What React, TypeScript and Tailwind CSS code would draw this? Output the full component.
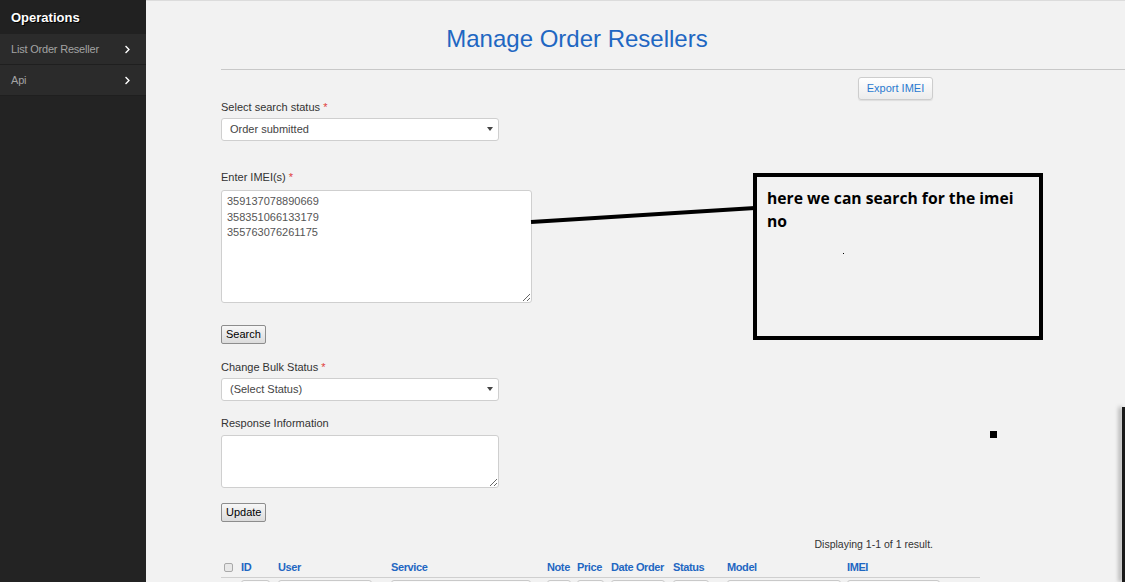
import React from 'react';
import { FaChevronRight } from 'react-icons/fa';

const font = { fontFamily: '"Liberation Sans", Arial, sans-serif' };

// Sidebar menu entry
const MenuItem = ({ label }: { label: string }) => (
  <div className="flex items-center justify-between h-[31px] pl-[11px] pr-[14px] bg-[#2b2b2b] border-b border-[#1f1f1f] text-[11px] text-[#a3a3a3] tracking-[-0.2px]">
    <span>{label}</span>
    <FaChevronRight className="text-white" size={9} />
  </div>
);

const Label = ({ text, required }: { text: string; required?: boolean }) => (
  <div className="text-[11px] leading-[14px] text-[#333]">
    {text} {required && <span className="text-[#e03c3c]">*</span>}
  </div>
);

const FakeSelect = ({ value }: { value: string }) => (
  <div className="relative flex items-center w-[278px] h-[23px] bg-white border border-[#cfcfcf] rounded-[3px] pl-[8px] text-[11px] text-[#444]">
    {value}
    <span className="absolute right-[5px] top-[8px] w-0 h-0 border-l-[3px] border-r-[3px] border-t-[4px] border-l-transparent border-r-transparent border-t-[#444]" />
  </div>
);

const GrayButton = ({ label }: { label: string }) => (
  <button className="block h-[19px] px-[4px] text-[11px] leading-none text-black bg-gradient-to-b from-[#f7f7f7] to-[#dcdcdc] border border-[#8d8d8d] rounded-[2px]">
    {label}
  </button>
);

const columns = [
  { label: 'ID', w: 37, input: 29 },
  { label: 'User', w: 113, input: 94 },
  { label: 'Service', w: 156, input: 140 },
  { label: 'Note', w: 30, input: 24 },
  { label: 'Price', w: 34, input: 27 },
  { label: 'Date Order', w: 62, input: 54 },
  { label: 'Status', w: 54, input: 36 },
  { label: 'Model', w: 120, input: 114 },
  { label: 'IMEI', w: 133, input: 93 },
];

const App: React.FC = () => {
  return (
    <div className="relative flex w-[1125px] h-[582px] overflow-hidden" style={font}>
      {/* Sidebar */}
      <aside className="w-[146px] shrink-0 bg-[#232323]">
        <div className="h-[34px] flex items-center pl-[11px] pt-[1px] bg-[#212121] text-[13px] font-bold text-white [text-shadow:1px_1px_0_#000]">
          Operations
        </div>
        <MenuItem label="List Order Reseller" />
        <MenuItem label="Api" />
      </aside>

      {/* Main */}
      <main className="flex-1 bg-[#f2f2f2] border-t border-[#dcdcdc] pt-[24px]">
        <div className="pl-[75px]">
          <h1 className="w-[712px] text-center text-[24px] leading-7 text-[#1f67c2]">Manage Order Resellers</h1>
        </div>
        <div className="ml-[75px] mt-[16px] border-t border-[#c8c8c8]" />

        <div className="pl-[75px]">
          <div className="w-[712px] flex justify-end mt-[7px]">
            <button className="block w-[75px] h-[23px] text-[11px] text-[#2a7ad0] bg-gradient-to-b from-white to-[#ececec] border border-[#cdcdcd] rounded-[3px] shadow-[0_1px_1px_rgba(0,0,0,0.08)]">
              Export IMEI
            </button>
          </div>

          <Label text="Select search status" required />
          <div className="mt-[4px]">
            <FakeSelect value="Order submitted" />
          </div>

          <div className="mt-[29px]">
            <Label text="Enter IMEI(s)" required />
          </div>
          <textarea
            readOnly
            className="block mt-[6px] w-[311px] h-[113px] bg-white border border-[#cfcfcf] rounded-[3px] px-[5px] py-[3px] text-[11px] leading-[15.5px] text-[#555] outline-none resize"
            value={'359137078890669\n358351066133179\n355763076261175'}
          />

          <div className="mt-[22px]">
            <GrayButton label="Search" />
          </div>

          <div className="mt-[16px]">
            <Label text="Change Bulk Status" required />
          </div>
          <div className="mt-[4px]">
            <FakeSelect value="(Select Status)" />
          </div>

          <div className="mt-[15px]">
            <Label text="Response Information" />
          </div>
          <textarea
            readOnly
            className="block mt-[5px] w-[278px] h-[53px] bg-white border border-[#cfcfcf] rounded-[3px] outline-none"
          />

          <div className="mt-[15px]">
            <GrayButton label="Update" />
          </div>

          <div className="w-[712px] mt-[15px] text-right text-[10.5px] leading-[14px] text-[#333]">Displaying 1-1 of 1 result.</div>

          {/* Table header */}
          <div className="w-[759px] mt-[6px]">
            <div className="flex items-center h-[21px] border-b border-[#cfcfcf] text-[11px] font-bold text-[#1f67c2] tracking-[-0.4px]">
              <div className="w-[20px] pl-[3px]">
                <div className="w-[9px] h-[9px] border border-[#a9a9a9] rounded-[2px] bg-[#e8e8e8]" />
              </div>
              {columns.map((c) => (
                <div key={c.label} style={{ width: c.w }}>{c.label}</div>
              ))}
            </div>
            <div className="flex pt-[2px]">
              <div className="w-[20px]" />
              {columns.map((c) => (
                <div key={c.label} style={{ width: c.w }}>
                  <div className="h-[18px] bg-[#fafafa] border border-[#c9c9c9] rounded-[3px]" style={{ width: c.input }} />
                </div>
              ))}
            </div>
          </div>
        </div>
      </main>

      {/* Annotation: connector line */}
      <svg className="absolute left-0 top-0 pointer-events-none" width="1125" height="582">
        <line x1="531" y1="222" x2="755" y2="208" stroke="#000" strokeWidth="4" />
      </svg>

      {/* Annotation: callout box */}
      <div className="absolute left-[753px] top-[173px] w-[290px] h-[167px] border-4 border-black pl-[10px] pt-[10px] text-[15.7px] leading-[23px] font-bold text-black" style={{ fontFamily: '"Open Sans", "Noto Sans", sans-serif' }}>
        here we can search for the imei
        <br />
        no
        <div className="absolute left-[86px] top-[76px] w-[1px] h-[1px] bg-black" />
      </div>

      {/* stray marks */}
      <div className="absolute left-[990px] top-[431px] w-[7px] h-[7px] bg-black" />
      <div className="absolute left-[1122px] top-[407px] w-[3px] h-[175px] bg-[#1a1a1a] shadow-[-3px_0_4px_rgba(0,0,0,0.35)]" />
    </div>
  );
};

export default App;
